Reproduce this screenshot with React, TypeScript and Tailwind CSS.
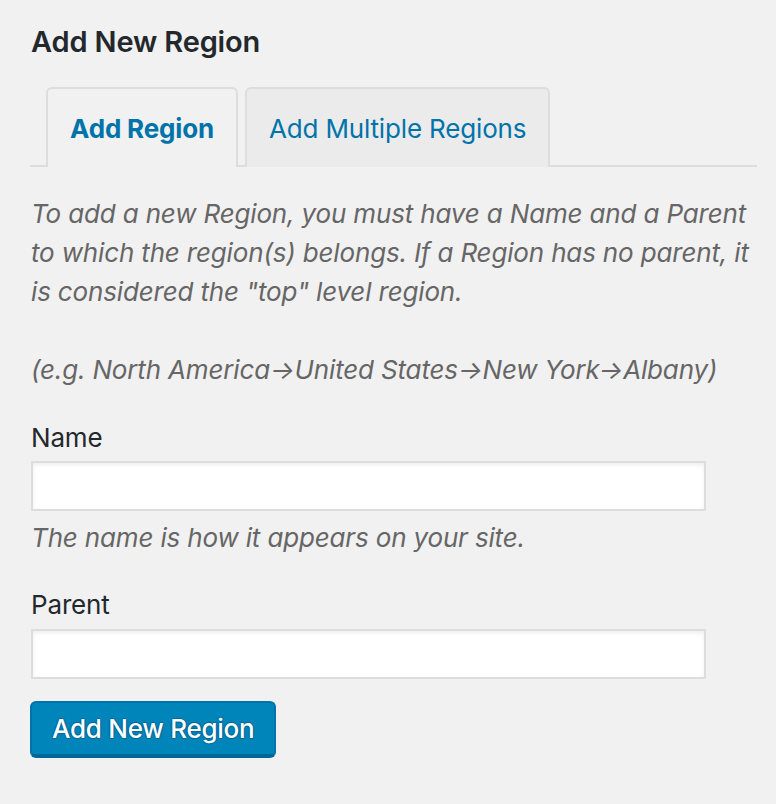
// Add New Region — WP admin style term form (2x scale)

const FONT = { fontFamily: 'Inter, "Noto Sans", "Liberation Sans", sans-serif' }

function Tab({ label, active }: { label: string; active?: boolean }) {
  return (
    <div
      className={
        'relative -mb-[2px] h-[80px] flex items-center px-[22px] border-2 border-b-0 border-[#dddddd] rounded-t-[6px] text-[26px] text-[#0073aa] ' +
        (active ? 'bg-[#f1f1f1] font-bold' : 'bg-[#ebebeb] font-normal')
      }
    >
      {label}
    </div>
  )
}

export default function App() {
  return (
    <div className="min-h-[804px] w-[776px] bg-[#f1f1f1] text-[#23282d] tracking-[-0.01em]" style={FONT}>
      <div className="pl-[30px] pt-[22px] w-[757px]">
        <h2 className="text-[29px] font-semibold leading-[40px] pl-[1px]">Add New Region</h2>

        {/* tabs */}
        <div className="mt-[25px] flex items-end gap-[7px] pl-[16px] border-b-2 border-[#dddddd]">
          <Tab label="Add Region" active />
          <Tab label="Add Multiple Regions" />
        </div>

        <p className="mt-[27px] pl-[1px] text-[26px] leading-[39px] italic text-[#666666]">
          To add a new Region, you must have a Name and a Parent to which the region(s) belongs. If a Region has no parent, it is considered the "top" level region.
          <br />
          <br />
          (e.g. North America→United States→New York→Albany)
        </p>

        <div className="mt-[29px] pl-[1px]">
          <label className="block text-[26px] leading-[39px]">Name</label>
          <input
            type="text"
            className="mt-[4px] block w-[675px] h-[50px] bg-white border-2 border-[#dddddd] shadow-[inset_0_2px_4px_rgba(0,0,0,0.07)] outline-none"
          />
          <p className="mt-[7px] text-[26px] leading-[39px] italic text-[#666666]">The name is how it appears on your site.</p>
        </div>

        <div className="mt-[28px] pl-[1px]">
          <label className="block text-[26px] leading-[39px]">Parent</label>
          <input
            type="text"
            className="mt-[5px] block w-[675px] h-[50px] bg-white border-2 border-[#dddddd] shadow-[inset_0_2px_4px_rgba(0,0,0,0.07)] outline-none"
          />
        </div>

        <button
          type="button"
          className="mt-[22px] h-[57px] px-[20px] rounded-[6px] bg-[#0085ba] border-2 border-[#0073aa] border-b-[4px] border-b-[#006799] text-white text-[26px] font-medium leading-none tracking-[-0.01em] [text-shadow:0_-1px_1px_#006799,1px_0_1px_#006799,0_1px_1px_#006799,-1px_0_1px_#006799]"
        >
          Add New Region
        </button>
      </div>
    </div>
  )
}
